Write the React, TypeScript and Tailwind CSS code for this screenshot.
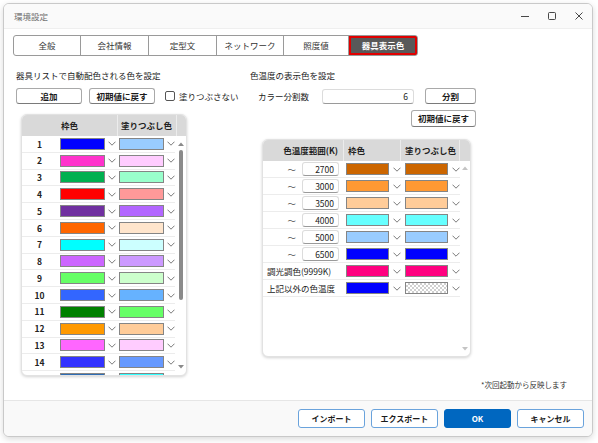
import React from "react";

/* ================================================================
   環境設定 -- 器具表示色 tab
   ================================================================ */

const LEFT_ROWS: [string, string][] = [
  ["#0000ff", "#99ccff"],
  ["#ff33cc", "#ffccff"],
  ["#00b050", "#99ffcc"],
  ["#ff0000", "#ff9999"],
  ["#7030a0", "#b266ff"],
  ["#ff6600", "#ffe5cc"],
  ["#00ffff", "#ccffff"],
  ["#cc66ff", "#cc99ff"],
  ["#66ff66", "#ccffcc"],
  ["#3366ff", "#66b2ff"],
  ["#008000", "#66ff66"],
  ["#ff9900", "#ffcc99"],
  ["#ff66ff", "#ffccff"],
  ["#3333ff", "#6699ff"],
  ["#2e6db4", "#33ffff"],
];

type TempRow = { label?: string; value?: string; frame: string; fill: string | null };

const TEMP_ROWS: TempRow[] = [
  { value: "2700", frame: "#cc6600", fill: "#cc6600" },
  { value: "3000", frame: "#ff9933", fill: "#ff9933" },
  { value: "3500", frame: "#ffcc99", fill: "#ffcc99" },
  { value: "4000", frame: "#66ffff", fill: "#66ffff" },
  { value: "5000", frame: "#99ccff", fill: "#99ccff" },
  { value: "6500", frame: "#0000ff", fill: "#0000ff" },
  { label: "調光調色(9999K)", frame: "#ff0080", fill: "#ff0080" },
  { label: "上記以外の色温度", frame: "#0000ff", fill: null },
];

const TABS = [
  { label: "全般", w: "w-[67px]" },
  { label: "会社情報", w: "w-[68px]" },
  { label: "定型文", w: "w-[68px]" },
  { label: "ネットワーク", w: "w-[67px]" },
  { label: "照度値", w: "w-[65px]" },
];

/* ──────────────────────────────────────────────────────────────
   Small pieces
   ────────────────────────────────────────────────────────────── */

const Chevron = () => (
  <svg width="8" height="5" viewBox="0 0 8 5" className="shrink-0">
    <path d="M0.5 0.7L4 4.2L7.5 0.7" stroke="#6b6b6b" strokeWidth="0.9" fill="none" />
  </svg>
);

const Arrow = ({ up, color }: { up?: boolean; color: string }) => (
  <svg width="6" height="4" viewBox="0 0 6 4" className="shrink-0">
    <path d={up ? "M0 4L3 0.5L6 4Z" : "M0 0L3 3.5L6 0Z"} fill={color} />
  </svg>
);

const Swatch = ({ color, w }: { color: string | null; w: string }) =>
  color ? (
    <div className={`h-[12px] ${w} border-[1.5px] border-[#858585]`} style={{ backgroundColor: color }} />
  ) : (
    <div
      className={`h-[12px] ${w} border-[1.5px] border-[#858585] bg-[repeating-conic-gradient(#d0d0d0_0%_25%,#ffffff_0%_50%)] bg-size-[4px_4px]`}
    />
  );

const Button: React.FC<{ children: React.ReactNode; className?: string }> = ({ children, className }) => (
  <button
    className={`flex items-center justify-center rounded-[3px] border border-[#a9a9a9] border-b-[#7a7a7a] bg-white text-[8.5px] font-bold text-[#1b1b1b] ${className ?? ""}`}
  >
    {children}
  </button>
);

/* ──────────────────────────────────────────────────────────────
   Left table
   ────────────────────────────────────────────────────────────── */

const LeftTable = () => (
  <div className="ml-[5px] mt-[10px] flex h-[262px] w-[166px] flex-col overflow-hidden rounded-[6px] border border-[#e2e2e2] bg-white shadow-[0_1px_3px_rgba(0,0,0,0.18)]">
    <div className="flex h-[21px] shrink-0 items-center bg-[#d9d9d9] text-[8.5px] font-semibold text-[#222]">
      <div className="w-[36px]" />
      <div className="flex h-full w-[60px] items-center border-r border-[#ececec] pl-[3px]">枠色</div>
      <div className="flex h-full w-[59px] items-center border-r border-[#ececec] pl-[3px]">塗りつぶし色</div>
      <div className="flex-1" />
    </div>
    <div className="flex min-h-0 flex-1">
      <div className="flex-1 overflow-hidden">
        {LEFT_ROWS.map(([frame, fill], i) => (
          <div key={i} className="flex h-[16.8px] items-center border-b border-[#ececec] text-[8.5px]">
            {/* the 15th row is scrolled mostly out of view, its number is hidden */}
            <div className="w-[36px] text-center font-semibold text-[#222]">{i < 14 ? i + 1 : ""}</div>
            <div className="flex w-[60px] items-center gap-[3px] pl-[3px]">
              <Swatch color={frame} w="w-[45px]" />
              <Chevron />
            </div>
            <div className="flex w-[59px] items-center gap-[3px] pl-[3px]">
              <Swatch color={fill} w="w-[45px]" />
              <Chevron />
            </div>
          </div>
        ))}
      </div>
      <div className="flex w-[11px] flex-col items-center pb-[6px] pt-[6px]">
        <Arrow up color="#8a8a8a" />
        <div className="mt-[4px] h-[150px] w-[4px] rounded-full bg-[#8a8a8a]" />
        <div className="flex-1" />
        <Arrow color="#8a8a8a" />
      </div>
    </div>
  </div>
);

/* ──────────────────────────────────────────────────────────────
   Right table
   ────────────────────────────────────────────────────────────── */

const TempTable = () => (
  <div className="ml-[12px] mt-[12px] flex h-[218px] w-[209px] flex-col overflow-hidden rounded-[6px] border border-[#e2e2e2] bg-white shadow-[0_1px_3px_rgba(0,0,0,0.18)]">
    <div className="flex h-[21px] shrink-0 items-center bg-[#d9d9d9] text-[8.5px] font-semibold text-[#222]">
      <div className="flex h-full w-[81px] items-center justify-end border-r border-[#ececec] pr-[5px]">色温度範囲(K)</div>
      <div className="flex h-full w-[57px] items-center border-r border-[#ececec] pl-[4px]">枠色</div>
      <div className="flex h-full w-[59px] items-center border-r border-[#ececec] pl-[4px]">塗りつぶし色</div>
      <div className="flex-1" />
    </div>
    <div className="flex min-h-0 flex-1">
      <div className="flex-1">
        {TEMP_ROWS.map((r, i) => (
          <div key={i} className="flex h-[17px] items-center border-b border-[#ececec] text-[8.5px] text-[#222]">
            {r.value ? (
              <div className="flex w-[81px] items-center justify-end gap-[6px] pr-[5px]">
                <span className="text-[#555]">〜</span>
                <div className="flex h-[14px] w-[37px] items-center justify-end rounded-[3px] border border-[#dcdcdc] border-b-[#9a9a9a] pr-[4px]">
                  {r.value}
                </div>
              </div>
            ) : (
              <div className="w-[81px] whitespace-nowrap pl-[4px]">{r.label}</div>
            )}
            <div className="flex w-[57px] items-center gap-[4px] pl-[2px]">
              <Swatch color={r.frame} w="w-[44px]" />
              <Chevron />
            </div>
            <div className="flex w-[59px] items-center gap-[4px] pl-[4px]">
              <Swatch color={r.fill} w="w-[44px]" />
              <Chevron />
            </div>
          </div>
        ))}
      </div>
      <div className="flex w-[12px] flex-col items-center pb-[5px] pt-[5px]">
        <Arrow up color="#c4c4c4" />
        <div className="flex-1" />
        <Arrow color="#c4c4c4" />
      </div>
    </div>
  </div>
);

/* ──────────────────────────────────────────────────────────────
   App
   ────────────────────────────────────────────────────────────── */

export default function App() {
  return (
    <div className="h-[443px] w-[598px] overflow-hidden bg-white pl-[3px] pt-[3px] font-['Noto_Sans_CJK_JP','Noto_Sans',sans-serif] text-[#1b1b1b]">
      <div className="flex h-[434px] w-[590px] flex-col overflow-hidden rounded-[6px] border border-[#c9c9c9] bg-white shadow-[0_2px_6px_rgba(0,0,0,0.15)]">
        {/* Title bar */}
        <div className="flex h-[25px] shrink-0 items-center border-b border-[#efefef] bg-[#fafafa] pl-[10px]">
          <span className="text-[8.5px] text-[#6e6e6e]">環境設定</span>
          <div className="flex-1" />
          <div className="flex items-center gap-[19px] pr-[9px]">
            <svg width="8" height="8" viewBox="0 0 8 8">
              <path d="M0 4.5H8" stroke="#333" strokeWidth="0.9" />
            </svg>
            <svg width="8" height="8" viewBox="0 0 8 8">
              <rect x="0.5" y="0.5" width="7" height="7" rx="1" stroke="#333" strokeWidth="0.9" fill="none" />
            </svg>
            <svg width="8" height="8" viewBox="0 0 8 8">
              <path d="M0.5 0.5L7.5 7.5M7.5 0.5L0.5 7.5" stroke="#333" strokeWidth="0.9" />
            </svg>
          </div>
        </div>

        {/* Body */}
        <div className="flex min-h-0 flex-1 flex-col px-[9px] pt-[6px]">
          {/* Tabs */}
          <div className="flex h-[21px] w-[405px] overflow-hidden rounded-[3px] border border-[#9a9a9a] text-[8.5px]">
            {TABS.map((t) => (
              <div key={t.label} className={`flex ${t.w} items-center justify-center border-r border-[#9a9a9a] text-[#333]`}>
                {t.label}
              </div>
            ))}
            <div className="flex flex-1 items-center justify-center border-2 border-[#e00000] bg-[#595959] font-bold text-white">
              器具表示色
            </div>
          </div>

          <div className="flex">
            {/* Left column */}
            <div className="ml-[3px] flex w-[234px] flex-col">
              <div className="mt-[13px] text-[8.5px] leading-[12px]">器具リストで自動配色される色を設定</div>
              <div className="mt-[7px] flex items-center">
                <Button className="h-[16px] w-[66px]">追加</Button>
                <Button className="ml-[7px] h-[16px] w-[66px]">初期値に戻す</Button>
                <div className="ml-[10px] h-[10px] w-[10px] rounded-[2px] border border-[#555] bg-white" />
                <span className="ml-[4px] text-[8.5px]">塗りつぶさない</span>
              </div>
              <LeftTable />
            </div>

            {/* Right column */}
            <div className="flex flex-col">
              <div className="mt-[13px] text-[8.5px] leading-[12px]">色温度の表示色を設定</div>
              <div className="mt-[7px] flex items-center">
                <span className="ml-[8px] w-[64px] text-[8.5px]">カラー分割数</span>
                <div className="flex h-[15px] w-[92px] items-center justify-end rounded-[3px] border border-[#dcdcdc] border-b-[#9a9a9a] pr-[5px] text-[8.5px]">
                  6
                </div>
                <Button className="ml-[11px] h-[16px] w-[51px]">分割</Button>
              </div>
              <Button className="ml-[161px] mt-[6px] h-[17px] w-[65px]">初期値に戻す</Button>
              <TempTable />
            </div>
          </div>

          <div className="flex-1" />
          <div className="pb-[10px] pr-[16px] text-right text-[7.5px] text-[#333]">*次回起動から反映します</div>
        </div>

        {/* Footer */}
        <div className="flex h-[36px] shrink-0 items-center justify-end gap-[6px] border-t border-[#e6e6e6] bg-[#f9f9f9] pr-[8px] text-[8px] font-bold">
          <button className="h-[19px] w-[67px] rounded-[3px] border border-[#6aa3dc] bg-white text-[#1b1b1b]">インポート</button>
          <button className="h-[19px] w-[67px] rounded-[3px] border border-[#6aa3dc] bg-white text-[#1b1b1b]">エクスポート</button>
          <button className="h-[19px] w-[67px] rounded-[3px] border border-[#0067c0] bg-[#0067c0] text-white">OK</button>
          <button className="h-[19px] w-[67px] rounded-[3px] border border-[#6aa3dc] bg-white text-[#1b1b1b]">キャンセル</button>
        </div>
      </div>
    </div>
  );
}
